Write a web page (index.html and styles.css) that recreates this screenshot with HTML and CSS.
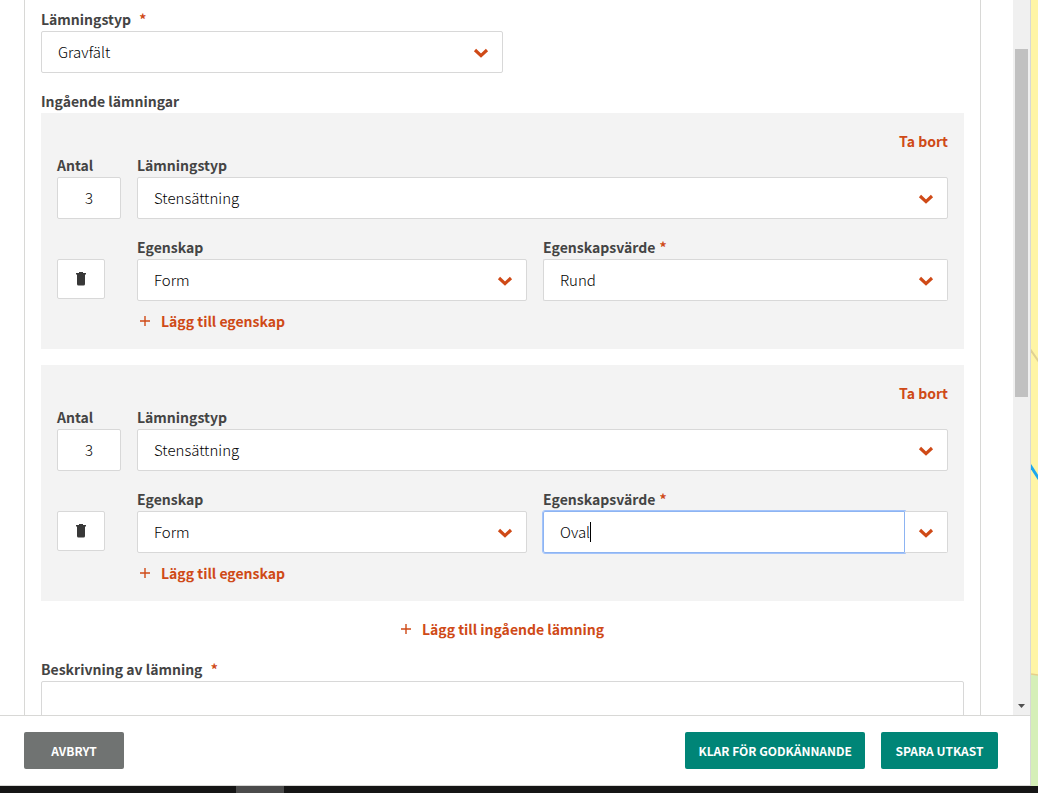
FILE: index.html
```html
<!DOCTYPE html>
<html lang="sv">
<head>
<meta charset="utf-8">
<meta name="viewport" content="width=device-width, initial-scale=1">
<title>Lämning</title>
<link rel="stylesheet" href="styles.css">
</head>
<body>
<svg class="symbols" aria-hidden="true">
  <symbol id="chevron" viewBox="0 0 16 10"><path d="M2 2l6 5.600 6-5.600" fill="none" stroke="currentColor" stroke-width="3.200"/></symbol>
  <symbol id="plus" viewBox="0 0 10 10"><path d="M5 0v10M0 5h10" fill="none" stroke="currentColor" stroke-width="1.400"/></symbol>
  <symbol id="trash" viewBox="0 0 10 14"><path d="M3 0h4v1h3v1.500H0V1h3zM1 2.500h8V12q0 1.500-1.500 1.500h-5Q1 13.500 1 12z" fill="currentColor"/></symbol>
</svg>
<div class="workspace">
  <main class="panel">
    <div class="scroll-area">
      <form class="card" id="form">
        <div class="field half">
          <label class="label" for="type">Lämningstyp <span class="required">*</span></label>
          <div class="select">
            <select id="type"><option>Gravfält</option></select>
            <svg class="chevron"><use href="#chevron"/></svg>
          </div>
        </div>

        <section class="parts">
          <h2 class="label">Ingående lämningar</h2>
          <fieldset class="part">
            <button class="link remove" type="button">Ta bort</button>
            <div class="row">
              <div class="field count">
                <label class="label" for="count1">Antal</label>
                <input class="input centered" id="count1" value="3">
              </div>
              <div class="field grow">
                <label class="label" for="type1">Lämningstyp</label>
                <div class="select">
                  <select id="type1"><option>Stensättning</option></select>
                  <svg class="chevron"><use href="#chevron"/></svg>
                </div>
              </div>
            </div>
            <div class="row">
              <div class="count delete-cell">
                <button class="delete" type="button" aria-label="Radera egenskap"><svg class="trash"><use href="#trash"/></svg></button>
              </div>
              <div class="properties">
                <div class="field">
                  <label class="label" for="prop1">Egenskap</label>
                  <div class="select">
                    <select id="prop1"><option>Form</option></select>
                    <svg class="chevron"><use href="#chevron"/></svg>
                  </div>
                </div>
                <div class="field">
                  <label class="label" for="value1">Egenskapsvärde <span class="required near">*</span></label>
                  <div class="combo">
                    <input class="input" id="value1" value="Rund">
                    <button class="toggle" type="button" aria-label="Visa alternativ"><svg class="arrow"><use href="#chevron"/></svg></button>
                  </div>
                </div>
              </div>
            </div>
            <button class="link add" type="button"><svg class="plus"><use href="#plus"/></svg>Lägg till egenskap</button>
          </fieldset>

          <fieldset class="part">
            <button class="link remove" type="button">Ta bort</button>
            <div class="row">
              <div class="field count">
                <label class="label" for="count2">Antal</label>
                <input class="input centered" id="count2" value="3">
              </div>
              <div class="field grow">
                <label class="label" for="type2">Lämningstyp</label>
                <div class="select">
                  <select id="type2"><option>Stensättning</option></select>
                  <svg class="chevron"><use href="#chevron"/></svg>
                </div>
              </div>
            </div>
            <div class="row">
              <div class="count delete-cell">
                <button class="delete" type="button" aria-label="Radera egenskap"><svg class="trash"><use href="#trash"/></svg></button>
              </div>
              <div class="properties">
                <div class="field">
                  <label class="label" for="prop2">Egenskap</label>
                  <div class="select">
                    <select id="prop2"><option>Form</option></select>
                    <svg class="chevron"><use href="#chevron"/></svg>
                  </div>
                </div>
                <div class="field">
                  <label class="label" for="value2">Egenskapsvärde <span class="required near">*</span></label>
                  <div class="combo active">
                    <input class="input" id="value2" value="Oval">
                    <span class="caret"></span>
                    <button class="toggle" type="button" aria-label="Visa alternativ"><svg class="arrow"><use href="#chevron"/></svg></button>
                  </div>
                </div>
              </div>
            </div>
            <button class="link add" type="button"><svg class="plus"><use href="#plus"/></svg>Lägg till egenskap</button>
          </fieldset>
          <button class="link add-part" type="button"><svg class="plus"><use href="#plus"/></svg>Lägg till ingående lämning</button>
        </section>

        <div class="field">
          <label class="label" for="description">Beskrivning av lämning <span class="required">*</span></label>
          <textarea class="description" id="description"></textarea>
        </div>
      </form>
      <div class="scrollbar" aria-hidden="true">
        <div class="thumb"></div>
        <svg class="scroll-down" viewBox="0 0 7 4"><path d="M0 0h7L3.500 4z" fill="#505050"/></svg>
      </div>
    </div>
    <footer class="actions">
      <button class="action cancel" type="button">AVBRYT</button>
      <button class="action" type="button">KLAR FÖR GODKÄNNANDE</button>
      <button class="action save" type="submit" form="form">SPARA UTKAST</button>
    </footer>
  </main>
  <aside class="map" aria-hidden="true">
    <svg class="map-drawing" viewBox="0 0 7 786" preserveAspectRatio="xMinYMin slice">
      <path d="M0 0h7v786H0z" fill="#fff5a5"/>
      <path d="M0 674l7 1v111H0z" fill="#d5efb8"/>
      <path d="M0 674l7 1" stroke="#e8cf8a" stroke-width="1.500"/>
      <path d="M-1 349l9 13" stroke="#e0d193" stroke-width="2"/>
      <path d="M-1 465l9 14" stroke="#1ba7ee" stroke-width="3"/>
    </svg>
  </aside>
</div>
<div class="taskbar"><span class="task"></span></div>
</body>
</html>
```
FILE: styles.css
```css
* { box-sizing: border-box; }

body {
  display: flex;
  flex-direction: column;
  height: 100vh;
  margin: 0;
  overflow: hidden;
  background: #fff;
  color: #383838;
  font: 15px/24px "Noto Sans CJK SC", "Noto Sans", sans-serif;
}

button, input, select, textarea { margin: 0; font: inherit; color: inherit; }
button { padding: 0; border: 0; background: none; cursor: pointer; }
svg { display: block; flex: none; }
.symbols { position: absolute; width: 0; height: 0; }

.workspace { display: flex; flex: 1; min-height: 0; }
.panel { display: flex; flex: 1; flex-direction: column; min-width: 0; }
.scroll-area { display: flex; flex: 1; min-height: 0; overflow: hidden; }

.card {
  display: flex;
  flex: 1;
  flex-direction: column;
  gap: 16px;
  align-self: flex-start;
  min-width: 0;
  margin: 0 32px 0 24px;
  padding: 7px 16px 16px;
  border: solid #d8d8d6;
  border-width: 0 1px;
}

.field { min-width: 0; }
.half { width: 50%; }
.grow { flex: 1; }
.label { display: block; margin: 0; color: #444; font-size: 14px; font-weight: 700; line-height: 24px; }
.required { margin-left: 5px; color: #cf4a17; }
.near { margin-left: 1px; }

.input, select, .description {
  display: block;
  width: 100%;
  border: 1px solid #d8d8d8;
  border-radius: 2px;
  background: #fff;
  color: #000;
  font-weight: 300;
  outline: 0;
}
.input, select { height: 42px; padding: 0 16px; }
.input { padding-bottom: 2px; }
select { appearance: none; }
.centered { text-align: center; }
.description { height: 120px; padding: 8px 16px; resize: none; }

.select { position: relative; }
.chevron, .arrow { width: 16px; height: 10px; color: #cf4a17; }
.chevron { position: absolute; top: 17px; right: 14px; pointer-events: none; }

.combo { position: relative; display: flex; }
.combo .input { flex: 1; min-width: 0; border-right: 0; border-radius: 2px 0 0 2px; }
.toggle {
  display: flex;
  align-items: center;
  justify-content: center;
  width: 43px;
  padding-top: 2px;
  border: 1px solid #d8d8d8;
  border-left: 0;
  border-radius: 0 2px 2px 0;
  background: #fff;
}
.active .input { border: 1px solid #8db4f2; outline: 1px solid #a3c3fa; }
.caret { position: absolute; top: 11px; left: 47px; width: 1px; height: 20px; background: #000; }

.part {
  display: flex;
  flex-direction: column;
  min-width: 0;
  margin: 0 0 16px;
  padding: 16px;
  border: 0;
  background: #f3f3f3;
}
.row { display: flex; gap: 16px; }
.row + .row { margin-top: 16px; }
.count { width: 64px; }
.delete-cell { padding-top: 24px; }
.delete {
  display: flex;
  align-items: center;
  justify-content: center;
  width: 48px;
  height: 40px;
  border: 1px solid #d8d8d8;
  border-radius: 2px;
  background: #fff;
}
.trash { width: 10px; height: 14px; }
.properties { display: grid; flex: 1; grid-template-columns: 26fr 27fr; gap: 16px; min-width: 0; }

.link { display: flex; align-items: center; color: #cf4a17; font-size: 14px; font-weight: 700; line-height: 24px; }
.remove { align-self: flex-end; }
.plus { width: 10px; height: 10px; margin-right: 11px; }
.add { align-self: flex-start; margin: 8px 0 0 83px; }
.add-part { margin: 0 auto; }

.scrollbar { position: relative; width: 17px; padding: 49px 2px 0; background: #f0f0f0; }
.thumb { height: 348px; background: #c1c1c1; }
.scroll-down { position: absolute; bottom: 7px; left: 5px; width: 7px; height: 4px; }

.actions {
  display: flex;
  gap: 16px;
  padding: 16px 32px 16px 24px;
  border: solid #d8d8d6;
  border-width: 1px 0;
}
.action {
  padding: 0 13px;
  border-radius: 2px;
  background: #008577;
  color: #fff;
  font-size: 12px;
  font-weight: 700;
  line-height: 37px;
}
.cancel { min-width: 100px; margin-right: auto; background: #707372; }
.save { min-width: 117px; }

.map { width: 8px; border-left: 1px solid #d8d8d6; overflow: hidden; }
.map-drawing { width: 7px; height: 100%; }
.taskbar { display: flex; height: 7px; padding-left: 236px; background: #151515; }
.task { width: 48px; background: #4b4b4b; }
```
